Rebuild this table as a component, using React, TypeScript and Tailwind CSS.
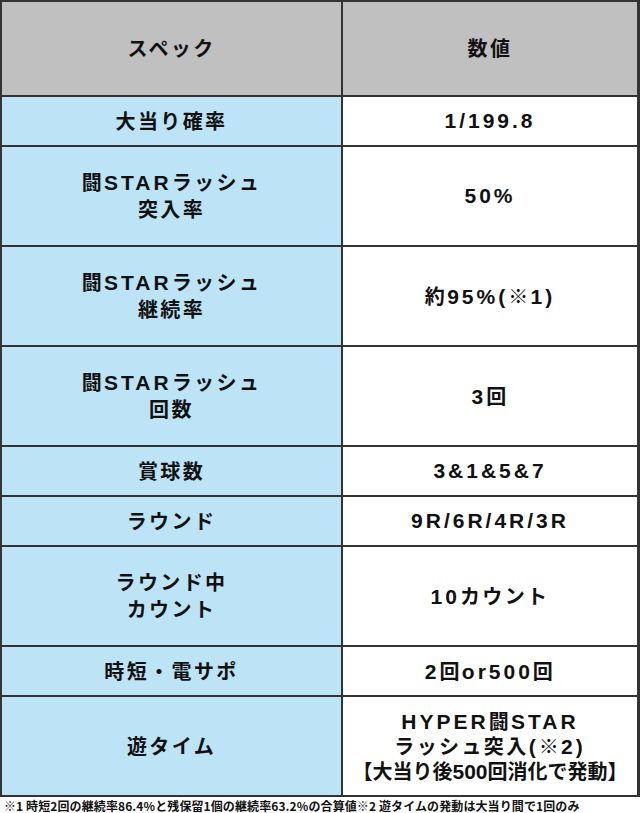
import React from "react";

type Row = { label: string[]; value: string[]; h: string };

const ROWS: Row[] = [
  { label: ["大当り確率"], value: ["1/199.8"], h: "h-[50px]" },
  { label: ["闘STARラッシュ", "突入率"], value: ["50%"], h: "h-[100px]" },
  { label: ["闘STARラッシュ", "継続率"], value: ["約95%(※1)"], h: "h-[100px]" },
  { label: ["闘STARラッシュ", "回数"], value: ["3回"], h: "h-[100px]" },
  { label: ["賞球数"], value: ["3&1&5&7"], h: "h-[50px]" },
  { label: ["ラウンド"], value: ["9R/6R/4R/3R"], h: "h-[50px]" },
  { label: ["ラウンド中", "カウント"], value: ["10カウント"], h: "h-[100px]" },
  { label: ["時短・電サポ"], value: ["2回or500回"], h: "h-[50px]" },
];

const CJK = '"Noto Sans CJK JP", sans-serif';
const LATIN = '"Liberation Sans", "Noto Sans CJK JP", sans-serif';

// latin runs are set wider than the jp ones, like the original image
const Mixed = ({ text, tight }: { text: string; tight?: boolean }) => (
  <span className="whitespace-nowrap">
    {text.split(/([\u3000-\u9fff\uff00-\uffef※【】・]+)/).map((part, i) =>
      part === "" ? null : /[\u3000-\u9fff\uff00-\uffef※【】・]/.test(part) ? (
        <span
          key={i}
          className={tight ? "text-[20px]" : "text-[20px] tracking-[2.4px]"}
          style={{ fontFamily: CJK }}
        >
          {part}
        </span>
      ) : (
        <span
          key={i}
          className={tight ? "text-[21px]" : "text-[21px] tracking-[3px]"}
          style={{ fontFamily: LATIN }}
        >
          {part}
        </span>
      )
    )}
  </span>
);

const Lines = ({ lines }: { lines: string[] }) => (
  <div className="flex flex-col items-center font-bold leading-[26px] text-[#111]">
    {lines.map((l) => (
      <Mixed key={l} text={l} />
    ))}
  </div>
);

export default function App() {
  return (
    <div className="w-[640px] bg-white" style={{ fontFamily: CJK }}>
      <div className="border-2 border-[#333] border-r-[3px]">
        {/* header */}
        <div className="flex h-[95px] border-b-2 border-[#333] bg-[#c0c0c0]">
          <div className="flex w-[341px] items-center justify-center border-r-2 border-[#333]">
            <Lines lines={["スペック"]} />
          </div>
          <div className="flex flex-1 items-center justify-center">
            <Lines lines={["数値"]} />
          </div>
        </div>

        {ROWS.map((r, i) => (
          <div key={i} className={`flex ${r.h} border-b-2 border-[#333]`}>
            <div className="flex w-[341px] items-center justify-center border-r-2 border-[#333] bg-[#bde3f7]">
              <Lines lines={r.label} />
            </div>
            <div className="flex flex-1 items-center justify-center bg-white">
              <Lines lines={r.value} />
            </div>
          </div>
        ))}

        {/* last row */}
        <div className="flex h-[98px]">
          <div className="flex w-[341px] items-center justify-center border-r-2 border-[#333] bg-[#bde3f7]">
            <Lines lines={["遊タイム"]} />
          </div>
          <div className="flex flex-1 flex-col items-center justify-center bg-white font-bold leading-[24px] text-[#111]">
            <Mixed text="HYPER闘STAR" />
            <Mixed text="ラッシュ突入(※2)" />
            <Mixed text="【大当り後500回消化で発動】" tight />
          </div>
        </div>
      </div>
      <p className="h-[18px] pl-[4px] text-[12px] font-bold leading-[18px] tracking-[0.1px] text-[#111]">
        ※1 時短2回の継続率86.4%と残保留1個の継続率63.2%の合算値※2 遊タイムの発動は大当り間で1回のみ
      </p>
    </div>
  );
}
